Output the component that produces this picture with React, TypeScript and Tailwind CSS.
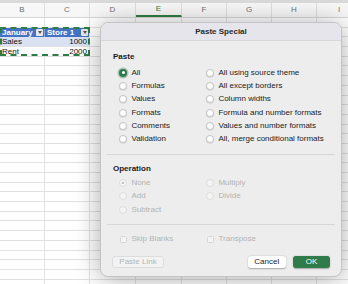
import React from 'react';

const letters = ['B', 'C', 'D', 'E', 'F', 'G', 'H', 'I'];

function Dropdown() {
  return (
    <span className="absolute right-[1px] top-[1.5px] flex h-[6.5px] w-[7px] items-center justify-center rounded-[1px] bg-[#e9e9e9]">
      <span className="h-0 w-0 border-x-[2.5px] border-t-[3px] border-x-transparent border-t-[#555]" />
    </span>
  );
}

function Sheet() {
  const rows = Array.from({ length: 28 }, (_, i) => i);
  return (
    <div className="bg-white">
      <div className="h-[3px] bg-[#dadada]" />
      <div className="grid h-[15px] grid-cols-[45px_45px_46px_46px_45px_45px_45px_45px] border-b border-[#d6d6d6] bg-[#f7f7f7] text-[8px] text-[#6f6f6f]">
        {letters.map((l) => (
          <div
            key={l}
            className={
              l === 'E'
                ? 'flex items-center justify-center border-r border-[#dedede] border-b-2 border-b-[#2e7d46] text-[#2e7d46]'
                : 'flex items-center justify-center border-r border-[#dedede]'
            }
          >
            {l}
          </div>
        ))}
      </div>
      {rows.map((r) => (
        <div
          key={r}
          className="grid h-[9.7px] grid-cols-[45px_45px_46px_46px_45px_45px_45px_45px] border-b border-[#e2e2e2] text-[8px] leading-[9px]"
        >
          {r === 1 ? (
            <>
              <div className="relative border-r border-[#8ea9db] bg-[#4472c4] pl-[2px] font-bold text-white">
                January
                <Dropdown />
              </div>
              <div className="relative border-r border-[#e2e2e2] bg-[#4472c4] pl-[2px] font-bold text-white">
                Store 1
                <Dropdown />
              </div>
            </>
          ) : r === 2 ? (
            <>
              <div className="bg-[#d9e1f2] pl-[2px] text-[#111]">Sales</div>
              <div className="border-r border-[#e2e2e2] bg-[#d9e1f2] pr-[2px] text-right text-[#111]">1000</div>
            </>
          ) : r === 3 ? (
            <>
              <div className="pl-[2px] text-[#111]">Rent</div>
              <div className="border-r border-[#e2e2e2] pr-[2px] text-right text-[#111]">2000</div>
            </>
          ) : (
            <>
              <div className="border-r border-[#e2e2e2]" />
              <div className="border-r border-[#e2e2e2]" />
            </>
          )}
          <div className="border-r border-[#e2e2e2]" />
          <div className="border-r border-[#e2e2e2]" />
          <div className="border-r border-[#e2e2e2]" />
          <div className="border-r border-[#e2e2e2]" />
          <div className="border-r border-[#e2e2e2]" />
          <div className="border-r border-[#e2e2e2]" />
        </div>
      ))}
    </div>
  );
}

function Radio({ label, checked, disabled }: { label: string; checked?: boolean; disabled?: boolean }) {
  let circle = 'flex h-[8px] w-[8px] shrink-0 items-center justify-center rounded-full border-[0.5px] border-[#c6c6c6] bg-white shadow-[0_0.5px_1px_rgba(0,0,0,0.15)]';
  if (checked && !disabled)
    circle = 'flex h-[8px] w-[8px] shrink-0 items-center justify-center rounded-full bg-[#2f7b4a] shadow-[0_0_0_1.5px_rgba(47,123,74,0.35)]';
  if (disabled)
    circle = 'flex h-[8px] w-[8px] shrink-0 items-center justify-center rounded-full border-[0.5px] border-[#dddddd] bg-[#f4f4f4]';
  return (
    <div className="flex h-[13.3px] items-center gap-[4.4px]">
      <span className={circle}>
        {checked && !disabled && <span className="h-[3px] w-[3px] rounded-full bg-white" />}
        {checked && disabled && <span className="h-[2.5px] w-[2.5px] rounded-full bg-[#b0b0b0]" />}
      </span>
      <span className={disabled ? 'text-[#b3b3b3]' : 'text-[#1c1c1c]'}>{label}</span>
    </div>
  );
}

function Check({ label }: { label: string }) {
  return (
    <div className="flex h-[13.3px] items-center gap-[5px]">
      <span className="h-[7px] w-[7px] shrink-0 rounded-[1.5px] border-[0.5px] border-[#d6d6d6] bg-[#f4f4f4]" />
      <span className="text-[#b3b3b3]">{label}</span>
    </div>
  );
}

function PasteSpecial() {
  return (
    <div className="absolute left-[100px] top-[22px] flex h-[255px] w-[242px] flex-col overflow-hidden rounded-[8px] border border-[#c4c4c4] bg-[#ededed] text-[8px] leading-[10px] shadow-[0_2px_26px_rgba(0,0,0,0.33)]">
      <div className="flex h-[18px] shrink-0 items-center justify-center border-b border-[#d6d6d6] bg-[#e6e5ec] font-bold text-[#2a2a2a]">
        Paste Special
      </div>
      <div className="px-[6px] pt-[11px]">
        <div className="pl-[6px] font-bold text-[#1a1a1a]">Paste</div>
        <div className="mt-[4px] grid grid-cols-[87px_1fr] pl-[12px]">
          <div className="flex flex-col">
            <Radio label="All" checked />
            <Radio label="Formulas" />
            <Radio label="Values" />
            <Radio label="Formats" />
            <Radio label="Comments" />
            <Radio label="Validation" />
          </div>
          <div className="flex flex-col">
            <Radio label="All using source theme" />
            <Radio label="All except borders" />
            <Radio label="Column widths" />
            <Radio label="Formula and number formats" />
            <Radio label="Values and number formats" />
            <Radio label="All, merge conditional formats" />
          </div>
        </div>
        <div className="mt-[8px] h-px bg-[#d6d6d6]" />
        <div className="mt-[9px] pl-[6px] font-bold text-[#1a1a1a]">Operation</div>
        <div className="mt-[2.5px] grid grid-cols-[87px_1fr] pl-[12px]">
          <div className="flex flex-col">
            <Radio label="None" checked disabled />
            <Radio label="Add" disabled />
            <Radio label="Subtract" disabled />
          </div>
          <div className="flex flex-col">
            <Radio label="Multiply" disabled />
            <Radio label="Divide" disabled />
          </div>
        </div>
        <div className="mt-[8px] h-px bg-[#d6d6d6]" />
        <div className="mt-[7.5px] grid grid-cols-[87px_1fr] pl-[12.5px]">
          <Check label="Skip Blanks" />
          <Check label="Transpose" />
        </div>
        <div className="mt-[10px] flex items-center pl-[5px] pr-[5px]">
          <div className="flex h-[12.5px] w-[52px] items-center justify-center rounded-[3px] border-[0.5px] border-[#dcdcdc] bg-[#f3f3f3] text-[#b3b3b3]">
            Paste Link
          </div>
          <div className="ml-auto flex h-[12.5px] w-[37.5px] items-center justify-center rounded-[3px] bg-white text-[#1c1c1c] shadow-[0_0.5px_1.5px_rgba(0,0,0,0.3)]">
            Cancel
          </div>
          <div className="ml-[7.5px] flex h-[12.5px] w-[37px] items-center justify-center rounded-[3px] bg-[#2f7b4a] font-medium text-white shadow-[0_0.5px_1.5px_rgba(0,0,0,0.3)]">
            OK
          </div>
        </div>
      </div>
    </div>
  );
}

export default function App() {
  return (
    <div className="relative h-[284px] w-[348px] overflow-hidden bg-white font-['Liberation_Sans',Arial,sans-serif]">
      <Sheet />
      {/* copy selection marquee */}
      <div className="absolute left-0 top-[27px] h-[29px] w-[90px] border-2 border-dashed border-[#2e7d46]" />
      <PasteSpecial />
    </div>
  );
}
